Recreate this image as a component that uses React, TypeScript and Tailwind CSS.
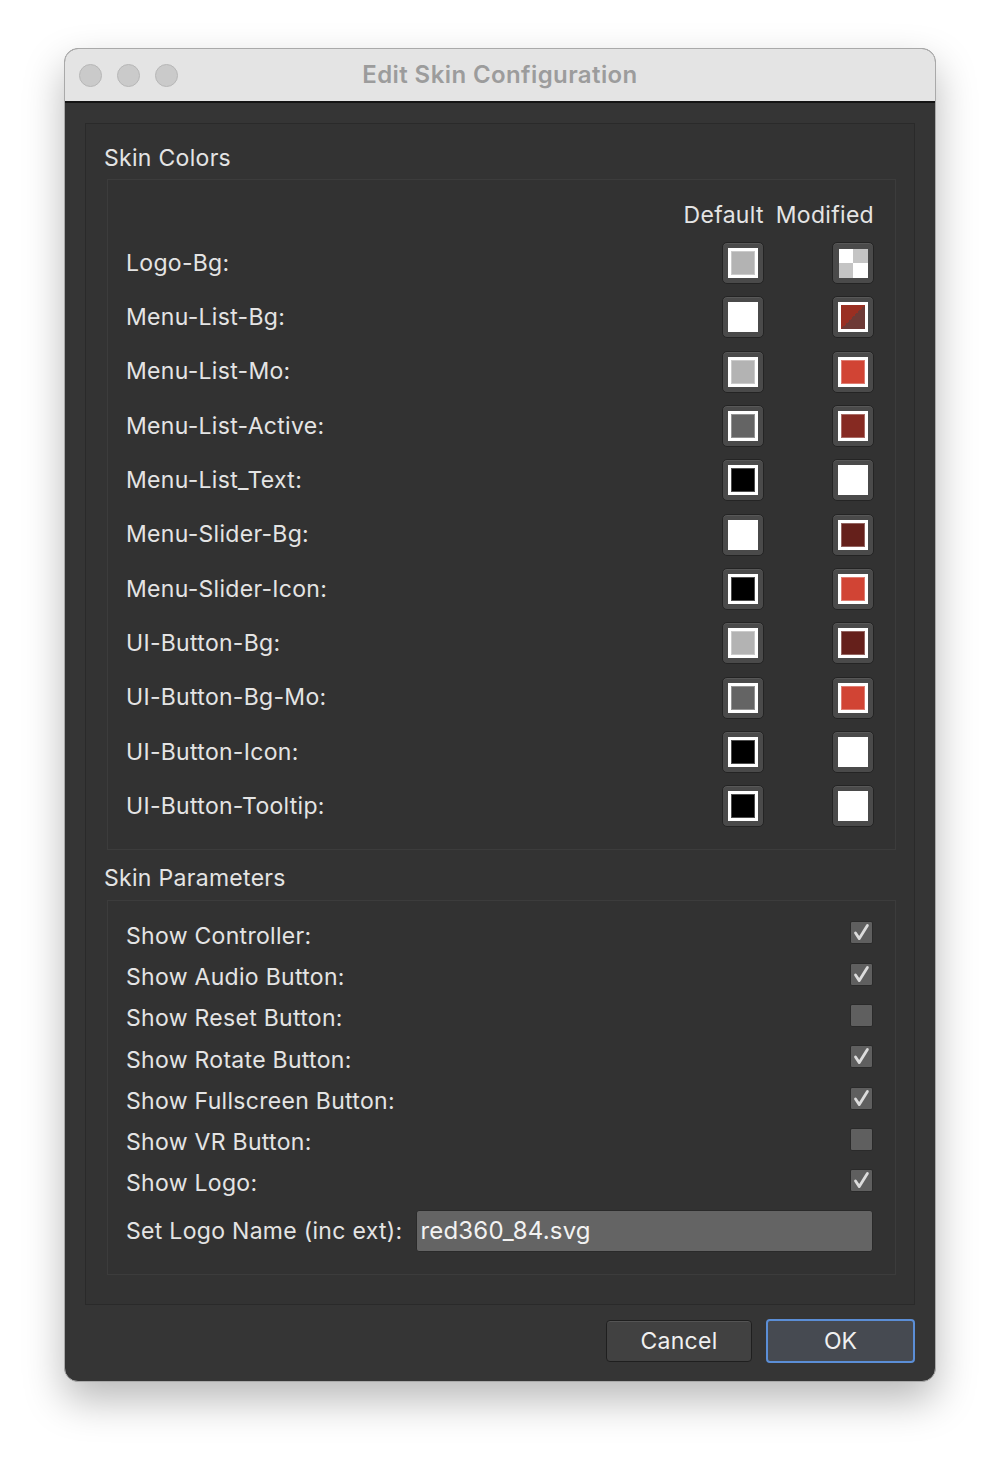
import React from 'react';

type Swatch = { label: string; def: string; mod: string };

const colors: Swatch[] = [
  { label: 'Logo-Bg:', def: '#b3b3b3', mod: 'checker' },
  { label: 'Menu-List-Bg:', def: '#ffffff', mod: 'diag' },
  { label: 'Menu-List-Mo:', def: '#b3b3b3', mod: '#d14434' },
  { label: 'Menu-List-Active:', def: '#646464', mod: '#862a22' },
  { label: 'Menu-List_Text:', def: '#000000', mod: '#ffffff' },
  { label: 'Menu-Slider-Bg:', def: '#ffffff', mod: '#65201b' },
  { label: 'Menu-Slider-Icon:', def: '#000000', mod: '#d14434' },
  { label: 'UI-Button-Bg:', def: '#b3b3b3', mod: '#65201b' },
  { label: 'UI-Button-Bg-Mo:', def: '#646464', mod: '#d14434' },
  { label: 'UI-Button-Icon:', def: '#000000', mod: '#ffffff' },
  { label: 'UI-Button-Tooltip:', def: '#000000', mod: '#ffffff' },
];

const params: { label: string; checked: boolean }[] = [
  { label: 'Show Controller:', checked: true },
  { label: 'Show Audio Button:', checked: true },
  { label: 'Show Reset Button:', checked: false },
  { label: 'Show Rotate Button:', checked: true },
  { label: 'Show Fullscreen Button:', checked: true },
  { label: 'Show VR Button:', checked: false },
  { label: 'Show Logo:', checked: true },
];

const ColorWell: React.FC<{ color: string }> = ({ color }) => {
  let inner: React.ReactNode;
  if (color === 'checker') {
    inner = (
      <div className="grid h-[29px] w-[29px] grid-cols-2 grid-rows-2">
        <div className="bg-white" />
        <div className="bg-[#c4c4c4]" />
        <div className="bg-[#c4c4c4]" />
        <div className="bg-white" />
      </div>
    );
  } else if (color === 'diag') {
    inner = (
      <div className="flex h-[30px] w-[30px] items-center justify-center bg-white">
        <div className="h-[24px] w-[24px] bg-[linear-gradient(135deg,#9a2f22_50%,#6d3a36_50%)]" />
      </div>
    );
  } else {
    inner = (
      <div className="flex h-[30px] w-[30px] items-center justify-center bg-white">
        <div className="h-[24px] w-[24px] border border-white/30" style={{ backgroundColor: color }} />
      </div>
    );
  }
  return (
    <div className="flex h-[42px] w-[42px] items-center justify-center rounded-[5px] border border-[#242424] bg-[#4a4a4a] shadow-[inset_0_1px_0_rgba(255,255,255,0.08)]">
      {inner}
    </div>
  );
};

const CheckBox: React.FC<{ checked: boolean }> = ({ checked }) => (
  <div className="mb-[6px] flex h-[23px] w-[23px] items-center justify-center rounded-[2px] border border-[#2a2a2a] bg-[#5f5f5f]">
    {checked && (
      <svg width="21" height="21" viewBox="0 0 21 21" fill="none">
        <path d="M4.5 11 L8.3 16.6 L16.4 3.4" stroke="#dcdcdc" strokeWidth="2.8" strokeLinecap="round" strokeLinejoin="round" />
      </svg>
    )}
  </div>
);

export default function App() {
  return (
    <div className="min-h-[1462px] bg-white px-[64px] pt-[48px] font-['Inter',sans-serif] text-[#e4e4e4]">
      <div className="flex h-[1334px] w-[872px] flex-col overflow-hidden rounded-[14px] border border-[#a9a9a9] bg-[#353535] shadow-[0_18px_40px_rgba(0,0,0,0.28)]">
        {/* title bar */}
        <div className="relative flex h-[54px] shrink-0 items-center border-b-2 border-[#141414] bg-[#e4e4e4]">
          <div className="flex gap-[15px] pl-[14px]">
            <span className="h-[23px] w-[23px] rounded-full border border-[#b7b7b7] bg-[#cacaca]" />
            <span className="h-[23px] w-[23px] rounded-full border border-[#b7b7b7] bg-[#cacaca]" />
            <span className="h-[23px] w-[23px] rounded-full border border-[#b7b7b7] bg-[#cacaca]" />
          </div>
          <div className="absolute inset-0 flex items-center justify-center text-[24px] font-semibold tracking-[0.4px] text-[#9c9c9c]">
            Edit Skin Configuration
          </div>
        </div>

        <div className="flex flex-1 flex-col px-[20px] pt-[20px]">
          {/* group box */}
          <div className="flex h-[1182px] flex-col border border-[#2a2a2a] bg-[#333333] pl-[21px] pr-[18px] text-[23px] tracking-[0.3px]">
            <div className="-ml-[3px] mt-[20px] h-[28px] leading-[28px]">Skin Colors</div>
            <div className="mt-[7px] border border-[#3c3c3c] bg-[#323232] pb-[16px] pl-[18px] pr-[21px] pt-[22px]">
              <div className="grid grid-cols-[1fr_auto_auto] items-center justify-items-end gap-x-[12px]">
                <div />
                <div className="h-[26px] leading-[26px]">Default</div>
                <div className="h-[26px] leading-[26px]">Modified</div>
                <div className="col-span-3 h-[8px]" />
                {colors.map((c) => (
                  <React.Fragment key={c.label}>
                    <div className="flex h-[54.3px] items-center justify-self-start">{c.label}</div>
                    <ColorWell color={c.def} />
                    <ColorWell color={c.mod} />
                  </React.Fragment>
                ))}
              </div>
            </div>

            <div className="-ml-[3px] mt-[14px] h-[28px] leading-[28px]">Skin Parameters</div>
            <div className="mt-[8px] border border-[#3c3c3c] bg-[#323232] pb-[22px] pl-[18px] pr-[22px] pt-[14px]">
              {params.map((p) => (
                <div key={p.label} className="flex h-[41.3px] items-center justify-between">
                  <span>{p.label}</span>
                  <CheckBox checked={p.checked} />
                </div>
              ))}
              <div className="mt-[6px] flex items-center gap-[14px]">
                <span className="whitespace-nowrap">Set Logo Name (inc ext):</span>
                <div className="flex h-[42px] flex-1 items-center rounded-[3px] border border-[#2a2a2a] bg-[#646464] px-[3px] text-[24px] tracking-[0.2px] text-[#f2f2f2]">
                  red360_84.svg
                </div>
              </div>
            </div>
          </div>

          {/* buttons */}
          <div className="mt-[14px] flex justify-end gap-[14px]">
            <button className="mt-[1px] h-[42px] w-[146px] rounded-[4px] border border-[#1f1f1f] bg-[#414141] text-[23px] tracking-[0.3px] text-[#f0f0f0] shadow-[inset_0_1px_0_rgba(255,255,255,0.1)]">
              Cancel
            </button>
            <button className="h-[44px] w-[149px] rounded-[4px] border-2 border-[#5b8ed6] bg-[#464a51] text-[23px] text-[#f0f0f0]">
              OK
            </button>
          </div>
        </div>
      </div>
    </div>
  );
}
